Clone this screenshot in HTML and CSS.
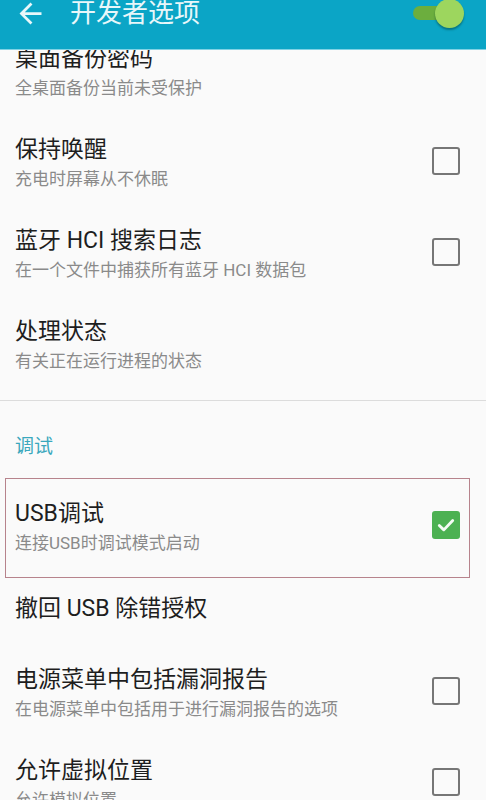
FILE: index.html
```html
<!DOCTYPE html>
<html lang="zh-CN">
<head>
<meta charset="utf-8">
<title>开发者选项</title>
<link rel="stylesheet" href="styles.css">
</head>
<body>
<header class="appbar">
  <div class="appbar-row">
    <svg class="back" viewBox="0 0 24 24" aria-hidden="true"><path d="M20 11H7.83l5.59-5.59L12 4l-8 8 8 8 1.41-1.41L7.83 13H20v-2z"/></svg>
    <h1 class="appbar-title">开发者选项</h1>
    <div class="switch"><span class="switch-track"></span><span class="switch-thumb"></span></div>
  </div>
</header>
<main class="list">
  <div class="item">
    <div class="text"><div class="title">桌面备份密码</div><div class="sub">全桌面备份当前未受保护</div></div>
  </div>
  <div class="item">
    <div class="text"><div class="title">保持唤醒</div><div class="sub">充电时屏幕从不休眠</div></div>
    <span class="cb"></span>
  </div>
  <div class="item">
    <div class="text"><div class="title">蓝牙 HCI 搜索日志</div><div class="sub">在一个文件中捕获所有蓝牙 HCI 数据包</div></div>
    <span class="cb"></span>
  </div>
  <div class="item">
    <div class="text"><div class="title">处理状态</div><div class="sub">有关正在运行进程的状态</div></div>
  </div>
  <div class="divider"></div>
  <div class="section">调试</div>
  <div class="item highlight">
    <div class="text"><div class="title">USB调试</div><div class="sub">连接USB时调试模式启动</div></div>
    <span class="cb checked"><svg viewBox="0 0 24 24" aria-hidden="true"><path d="M5.8 12.4l4.2 4.1 8.2-8.6"/></svg></span>
  </div>
  <div class="item single">
    <div class="text"><div class="title">撤回 USB 除错授权</div></div>
  </div>
  <div class="item">
    <div class="text"><div class="title">电源菜单中包括漏洞报告</div><div class="sub">在电源菜单中包括用于进行漏洞报告的选项</div></div>
    <span class="cb"></span>
  </div>
  <div class="item">
    <div class="text"><div class="title">允许虚拟位置</div><div class="sub">允许模拟位置</div></div>
    <span class="cb"></span>
  </div>
</main>
</body>
</html>
```
FILE: styles.css
```css
html, body {
  margin: 0;
  padding: 0;
}
body {
  background: #fafafa;
  width: 486px;
  height: 800px;
  overflow: hidden;
  font-family: Roboto, "Noto Sans CJK SC", "Noto Sans", sans-serif;
}
.appbar {
  position: relative;
  z-index: 2;
  height: 50px;
  background: #0ba5c6;
  border-bottom: 1px solid #7fd2e4;
  box-sizing: border-box;
}
.appbar-row {
  height: 26px;
  display: flex;
  align-items: center;
  padding: 0 22px 0 14px;
}
.back {
  width: 33px;
  height: 33px;
  fill: #e8f7fa;
  flex: none;
}
.appbar-title {
  margin: 0 0 0 23px;
  font-size: 26px;
  line-height: 26px;
  font-weight: 400;
  color: #e8f7fa;
  letter-spacing: 0;
}
.switch {
  margin-left: auto;
  position: relative;
  width: 51px;
  height: 26px;
}
.switch-track {
  position: absolute;
  left: 0;
  top: 6px;
  width: 36px;
  height: 14px;
  border-radius: 7px;
  background: #6cae3e;
}
.switch-thumb {
  position: absolute;
  left: 22px;
  top: -1px;
  width: 29px;
  height: 29px;
  border-radius: 50%;
  background: #9dd65e;
  box-shadow: 0 2px 2px rgba(0, 60, 50, 0.45);
}
.list {
  margin-top: -22px;
}
.item {
  position: relative;
  display: flex;
  align-items: center;
  padding: 16px 26px 17px 15px;
}
.item.single {
  padding-bottom: 25px;
}
.item.highlight {
  padding-top: 21px;
  padding-bottom: 21px;
}
.item.highlight::after {
  content: "";
  position: absolute;
  top: 0;
  bottom: 0;
  left: 5px;
  right: 16px;
  border: 1.5px solid #b7838c;
  pointer-events: none;
}
.text {
  flex: 1;
  min-width: 0;
}
.title {
  font-size: 23px;
  line-height: 30px;
  color: #1e1e1e;
  white-space: nowrap;
}
.sub {
  font-size: 17px;
  line-height: 28px;
  color: #8a8a8a;
  white-space: nowrap;
}
.cb {
  flex: none;
  width: 28px;
  height: 28px;
  box-sizing: border-box;
  border: 2.5px solid #767676;
  border-radius: 3px;
  margin-bottom: 6px;
}
.cb.checked {
  border: none;
  background: #4cb152;
  border-radius: 3px;
  display: flex;
  align-items: center;
  justify-content: center;
}
.cb.checked svg {
  width: 26px;
  height: 26px;
  fill: none;
  stroke: #f4fbf4;
  stroke-width: 2.6;
  stroke-linecap: round;
  stroke-linejoin: round;
}
.divider {
  margin-top: 8px;
  height: 1px;
  background: #dcdcdc;
}
.section {
  padding: 32px 15px 17px;
  font-size: 19px;
  line-height: 28px;
  color: #3aa8bd;
}
```
